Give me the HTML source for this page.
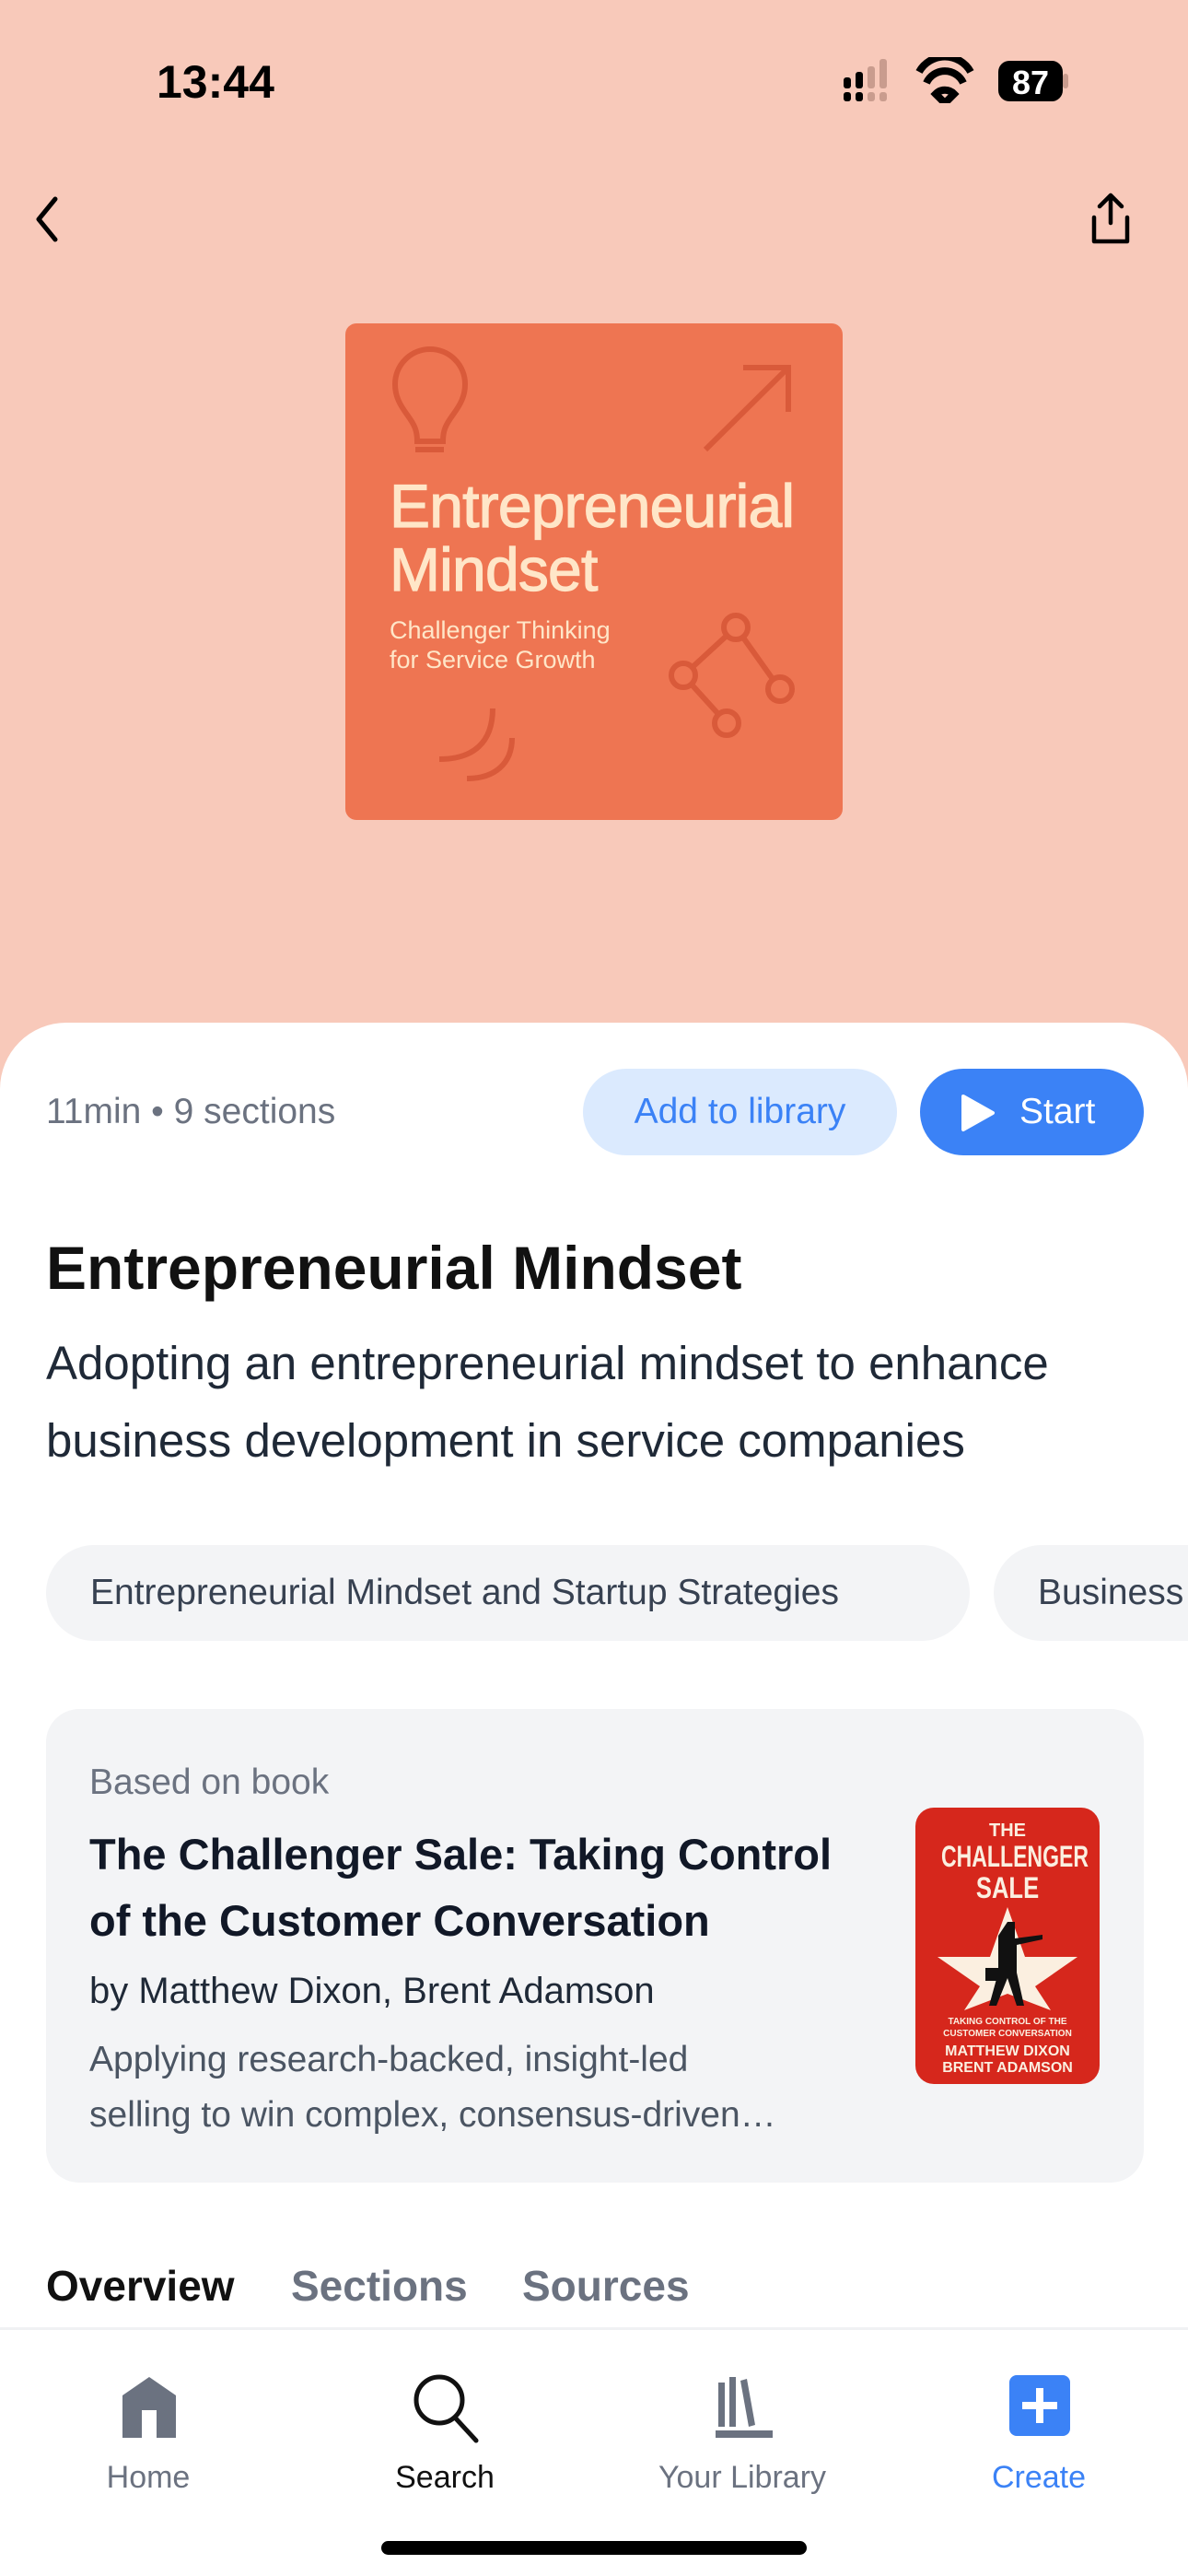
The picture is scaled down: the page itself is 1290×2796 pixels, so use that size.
<!DOCTYPE html>
<html><head><meta charset="utf-8"><style>
*{margin:0;padding:0;box-sizing:border-box}
body{width:1290px;height:2796px;background:#F8C9BA;font-family:"Liberation Sans",sans-serif;position:relative;overflow:hidden;color:#111}
.a{position:absolute;white-space:nowrap}
.sheet{position:absolute;left:0;top:1110px;width:1290px;height:1686px;background:#fff;border-radius:72px 72px 0 0}
.gray{color:#6B7280}
.chip{position:absolute;top:1677px;height:104px;background:#F3F4F6;border-radius:52px;font-size:39px;color:#374151;line-height:104px;padding:0 48px}
.tabl{position:absolute;top:2670px;font-size:34px;text-align:center;width:240px}
</style></head><body>
<div class="a" style="left:170px;top:60px;font-size:50px;font-weight:bold;color:#000">13:44</div>
<svg class="a" style="left:910px;top:62px" width="280" height="50">
<rect x="6" y="22" width="8" height="12" rx="3"/><rect x="6" y="38" width="8" height="10" rx="3"/>
<rect x="19" y="16" width="8" height="18" rx="3"/><rect x="19" y="38" width="8" height="10" rx="3"/>
<rect x="32" y="10" width="8" height="24" rx="3" fill="#C99C8E"/><rect x="32" y="38" width="8" height="10" rx="3" fill="#C99C8E"/>
<rect x="45" y="2" width="8" height="32" rx="3" fill="#C99C8E"/><rect x="45" y="38" width="8" height="10" rx="3" fill="#C99C8E"/>
<path d="M88 16 a32 32 0 0 1 56 0 M96 28 a22 22 0 0 1 40 0 M106 40 l10 10 l10 -10 a14 14 0 0 0 -20 0z" stroke="#000" stroke-width="8" fill="none"/>
<rect x="174" y="4" width="70" height="44" rx="12" fill="#000"/>
<rect x="244" y="18" width="6" height="16" rx="3" fill="#C99C8E"/>
<text x="209" y="40" font-size="36" font-weight="bold" fill="#fff" text-anchor="middle" font-family="Liberation Sans">87</text>
</svg>
<svg class="a" style="left:30px;top:210px" width="40" height="56"><path d="M30 6 L12 28 L30 50" stroke="#000" stroke-width="5" fill="none" stroke-linecap="round" stroke-linejoin="round"/></svg>
<svg class="a" style="left:1180px;top:206px" width="52" height="64"><path d="M26 36 V6 M14 18 L26 6 L38 18 M8 30 V56 H44 V30" stroke="#000" stroke-width="4.5" fill="none" stroke-linecap="round" stroke-linejoin="round"/></svg>

<div class="a" style="left:375px;top:351px;width:540px;height:539px;background:#EE7552;border-radius:12px;overflow:hidden">
<svg class="a" style="left:0;top:0" width="540" height="539" fill="none" stroke="#D95A3A" stroke-width="6">
<path d="M78 128 c0 -12 -3 -18 -11 -29 c-8 -11 -13 -20 -13 -33 a38 38 0 0 1 76 0 c0 13 -5 22 -13 33 c-8 11 -11 17 -11 29z"/>
<path d="M76 137 h31"/>
<path d="M391 137 L481 48 M432 48 H481 V96"/>
<circle cx="424" cy="330" r="13"/><circle cx="367" cy="382" r="13"/><circle cx="472" cy="397" r="13"/><circle cx="414" cy="434" r="13"/>
<path d="M377 373 L414 339 M432 341 L464 386 M376 392 L405 424"/>
<path d="M160 418 c0 37 -21 55 -58 55 M181 450 c0 28 -19 44 -49 44"/>
</svg>
<div class="a" style="left:48px;top:164px;font-size:66px;color:#FFE6C8;line-height:69px;letter-spacing:-0.8px;-webkit-text-stroke:1.2px #FFE6C8">Entrepreneurial<br>Mindset</div>
<div class="a" style="left:48px;top:317px;font-size:27px;color:#FFE6C8;line-height:32px">Challenger Thinking<br>for Service Growth</div>
</div>

<div class="sheet"></div>
<div class="a gray" style="left:50px;top:1185px;font-size:39px">11min • 9 sections</div>
<div class="a" style="left:633px;top:1160px;width:341px;height:94px;border-radius:47px;background:#DBEAFE;color:#3B82F6;font-size:39px;line-height:94px;text-align:center">Add to library</div>
<div class="a" style="left:999px;top:1160px;width:243px;height:94px;border-radius:47px;background:#3B82F6;color:#fff;font-size:39px;line-height:94px;padding-left:108px">Start</div>
<svg class="a" style="left:1040px;top:1186px" width="44" height="44"><path d="M6 4 L38 22 L6 40z" fill="#fff" stroke="#fff" stroke-width="4" stroke-linejoin="round"/></svg>

<div class="a" style="left:50px;top:1338px;font-size:66px;font-weight:bold">Entrepreneurial Mindset</div>
<div class="a" style="left:50px;top:1438px;font-size:51px;line-height:84px;color:#1F2937">Adopting an entrepreneurial mindset to enhance<br>business development in service companies</div>
<div class="chip" style="left:50px;width:1003px">Entrepreneurial Mindset and Startup Strategies</div>
<div class="chip" style="left:1079px;width:400px">Business</div>

<div class="a" style="left:50px;top:1855px;width:1192px;height:514px;background:#F3F4F6;border-radius:36px"></div>
<div class="a gray" style="left:97px;top:1913px;font-size:39px">Based on book</div>
<div class="a" style="left:97px;top:1977px;font-size:47px;font-weight:bold;line-height:72px;color:#111827">The Challenger Sale: Taking Control<br>of the Customer Conversation</div>
<div class="a" style="left:97px;top:2139px;font-size:40px;color:#1F2937">by Matthew Dixon, Brent Adamson</div>
<div class="a" style="left:97px;top:2206px;font-size:39px;line-height:60px;color:#4B5563">Applying research-backed, insight-led<br>selling to win complex, consensus-driven…</div>
<div class="a" style="left:994px;top:1962px;width:200px;height:300px;background:#D6271C;border-radius:20px;overflow:hidden;text-align:center;color:#FBEFE0;font-family:'Liberation Sans Narrow','Liberation Sans',sans-serif;font-weight:bold">
<div style="font-size:20px;margin-top:14px;line-height:22px">THE</div>
<div style="font-size:32px;line-height:34px;transform:scaleX(0.72)">CHALLENGER</div>
<div style="font-size:32px;line-height:34px;transform:scaleX(0.8)">SALE</div>
<svg width="200" height="120" style="display:block;margin-top:0"><path d="M100 4 L119 58 L176 58 L130 90 L147 116 L100 98 L53 116 L70 90 L24 58 L81 58z" fill="#FBEFE0"/><path d="M100 20 h8 v18 l30 -4 v5 l-28 6 v30 l8 36 h-8 l-10 -30 l-12 30 h-8 l10 -36 v-40z" fill="#111"/><rect x="76" y="70" width="18" height="14" fill="#111"/></svg>
<div style="font-size:10px;line-height:13px;margin-top:2px">TAKING CONTROL OF THE<br>CUSTOMER CONVERSATION</div>
<div style="font-size:16px;line-height:18px;margin-top:4px">MATTHEW DIXON<br>BRENT ADAMSON</div>
</div>

<div class="a" style="left:50px;top:2454px;font-size:46px;font-weight:bold">Overview</div>
<div class="a gray" style="left:316px;top:2454px;font-size:46px;font-weight:bold">Sections</div>
<div class="a gray" style="left:567px;top:2454px;font-size:46px;font-weight:bold">Sources</div>
<div class="a" style="left:0;top:2526px;width:1290px;height:3px;background:#F0F1F3"></div>

<svg class="a" style="left:130px;top:2578px" width="64" height="70"><path d="M3 22 L32 2 L61 22 V68 H40 V38 H24 V68 H3z" fill="#6B7280"/></svg>
<svg class="a" style="left:445px;top:2575px" width="80" height="80"><circle cx="32" cy="30" r="25" stroke="#111" stroke-width="5" fill="none"/><path d="M49 49 L72 74" stroke="#111" stroke-width="5" stroke-linecap="round"/></svg>
<svg class="a" style="left:775px;top:2578px" width="66" height="70"><rect x="5" y="8" width="7" height="48" fill="#6B7280"/><rect x="17" y="2" width="7" height="54" fill="#6B7280"/><path d="M29 6 L36 4 L45 54 L38 56z" fill="#6B7280"/><rect x="2" y="60" width="62" height="8" fill="#6B7280"/></svg>
<svg class="a" style="left:1094px;top:2576px" width="70" height="70"><rect x="2" y="2" width="66" height="66" rx="8" fill="#3B82F6"/><path d="M35 16 V54 M16 35 H54" stroke="#fff" stroke-width="8"/></svg>
<div class="tabl gray" style="left:41px">Home</div>
<div class="tabl" style="left:363px;color:#111">Search</div>
<div class="tabl gray" style="left:686px">Your Library</div>
<div class="tabl" style="left:1008px;color:#3B82F6">Create</div>
<div class="a" style="left:414px;top:2758px;width:462px;height:15px;border-radius:8px;background:#000"></div>
</body></html>
